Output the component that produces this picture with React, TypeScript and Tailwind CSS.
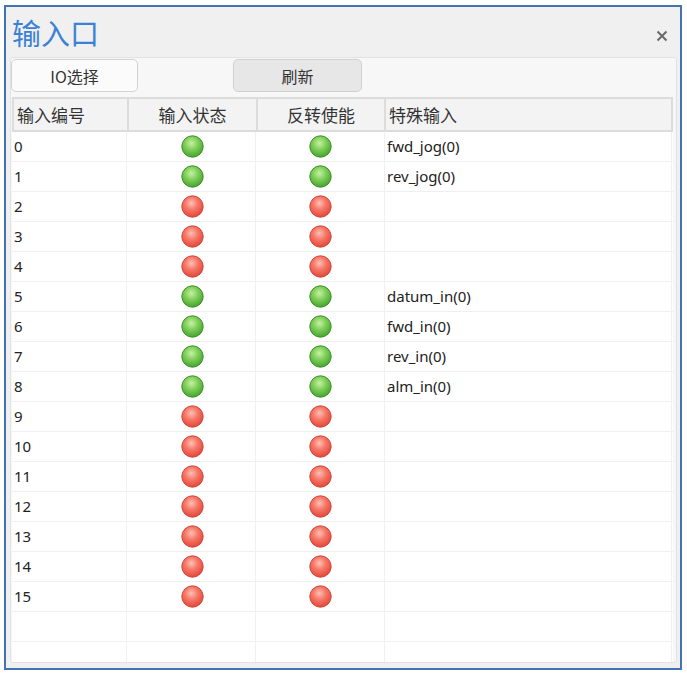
import React from "react";

const special: Record<number, string> = {
  0: "fwd_jog(0)",
  1: "rev_jog(0)",
  5: "datum_in(0)",
  6: "fwd_in(0)",
  7: "rev_in(0)",
  8: "alm_in(0)",
};
const on = new Set([0, 1, 5, 6, 7, 8]);

function Led({ green }: { green: boolean }) {
  const id = green ? "g" : "r";
  return (
    <svg width="23" height="23" viewBox="0 0 23 23">
      <defs>
        <radialGradient id={`fill-${id}`} cx="45%" cy="35%" r="65%">
          <stop offset="0%" stopColor={green ? "#c8f0a6" : "#ffc2b6"} />
          <stop offset="45%" stopColor={green ? "#82d05c" : "#f7796a"} />
          <stop offset="100%" stopColor={green ? "#44a52e" : "#e2473a"} />
        </radialGradient>
      </defs>
      <circle cx="11.5" cy="11.5" r="10.7" fill={`url(#fill-${id})`} stroke={green ? "#3f902c" : "#cf4b3e"} strokeWidth="1" />
    </svg>
  );
}

const cellFont = { fontFamily: '"Noto Sans", "Noto Sans CJK SC", sans-serif' };

export default function App() {
  const rows = Array.from({ length: 16 }, (_, i) => i);
  return (
    <div className="w-[687px] h-[675px] bg-white pl-[4px] pt-[5px]" style={{ fontFamily: '"Noto Sans CJK SC", "Noto Sans", sans-serif' }}>
      <div className="w-[678px] h-[665px] border-2 border-[#4373b4] bg-[#f0f0f0] flex flex-col overflow-hidden">
        <div className="h-[50px] shrink-0 flex items-start justify-between pl-[6px] pr-[12px] pt-[6px]">
          <div className="text-[29px] leading-[38px] text-[#3b82d6]">输入口</div>
          <svg width="12" height="12" viewBox="0 0 12 12" className="mt-[17px]">
            <path d="M1.5 1.5 L10.5 10.5 M10.5 1.5 L1.5 10.5" stroke="#6a6a6a" strokeWidth="2" />
          </svg>
        </div>
        <div className="flex-1 ml-[4px] mr-[3px] mb-[5px] bg-[#f7f7f7] border border-[#e2e2e2] rounded-[3px] flex flex-col overflow-hidden">
          <div className="flex items-start h-[39px] shrink-0 pt-[1px]">
            <div className="w-[127px] h-[33px] bg-[#fbfbfb] border border-[#d2d2d2] rounded-[5px] flex items-center justify-center text-[16px] text-[#333]">
              IO选择
            </div>
            <div className="ml-[95px] w-[129px] h-[33px] bg-[#e7e7e7] border border-[#d0d0d0] rounded-[5px] flex items-center justify-center text-[16px] text-[#333]">
              刷新
            </div>
          </div>
          <div className="ml-[1px] mr-[3px] flex-1 bg-white flex flex-col overflow-hidden">
            <div className="grid grid-cols-[115px_129px_128px_288px] h-[35px] shrink-0 bg-[#f3f3f3] border-2 border-[#dcdcdc] text-[17px] text-[#333]">
              <div className="flex items-center pl-[3px] border-r-2 border-[#dcdcdc]">输入编号</div>
              <div className="flex items-center justify-center border-r-2 border-[#dcdcdc]">输入状态</div>
              <div className="flex items-center justify-center border-r-2 border-[#dcdcdc]">反转使能</div>
              <div className="flex items-center pl-[3px]">特殊输入</div>
            </div>
            {[...rows, -1, -2].map((i) => (
              <div key={i} className="grid grid-cols-[115px_129px_129px_287px] h-[30px] shrink-0 border-b border-[#efefef] text-[15px] text-[#222]" style={cellFont}>
                <div className="flex items-center pl-[2px] border-r border-[#f0f0f0]">{i >= 0 ? i : ""}</div>
                <div className="flex items-center justify-center pl-[3px] border-r border-[#f0f0f0]">
                  {i >= 0 && <Led green={on.has(i)} />}
                </div>
                <div className="flex items-center justify-center border-r border-[#f0f0f0]">
                  {i >= 0 && <Led green={on.has(i)} />}
                </div>
                <div className="flex items-center pl-[2px] border-r border-[#f0f0f0]">{i >= 0 ? special[i] ?? "" : ""}</div>
              </div>
            ))}
          </div>
        </div>
      </div>
    </div>
  );
}
